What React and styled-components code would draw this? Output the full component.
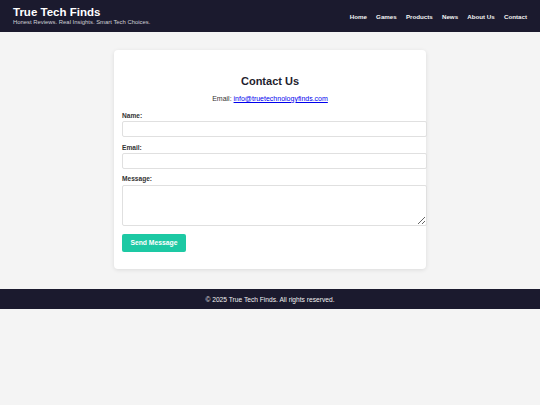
import React from "react";
import styled, { createGlobalStyle } from "styled-components";

const Global = createGlobalStyle`
  html, body { margin: 0; padding: 0; background: #f4f4f4; }
  body { font-family: "Liberation Sans", Arial, sans-serif; color: #333; }
  * { font-family: "Liberation Sans", Arial, sans-serif; }
`;

const Header = styled.header`
  background: #1b1a2e;
  color: #fff;
  height: 32px;
  box-sizing: border-box;
  padding: 0 13px;
  display: flex;
  align-items: center;
  justify-content: space-between;
`;

const Brand = styled.div`
  display: flex;
  flex-direction: column;
`;

const Title = styled.h1`
  margin: 0;
  font-size: 11.5px;
  line-height: 1.15;
  font-weight: 700;
  color: #fff;
`;

const Tagline = styled.p`
  margin: 0;
  font-size: 5.9px;
  line-height: 1.15;
  color: #cfcfd6;
`;

const Nav = styled.nav`
  display: flex;
  gap: 9.2px;
  padding-top: 1px;
`;

const NavLink = styled.a`
  color: #f4f4f4;
  text-decoration: none;
  font-weight: 700;
  font-size: 6.2px;
`;

const Main = styled.main`
  padding: 18px 0 20.7px;
`;

const Card = styled.section`
  width: 296px;
  margin: 0 auto;
  padding: 8px 8px 8.5px;
  background: #fff;
  border-radius: 4px;
  box-shadow: 0 1px 4px rgba(0, 0, 0, 0.1);
`;

const Heading = styled.h2`
  margin: 17.4px 0 0;
  text-align: center;
  font-size: 11px;
  line-height: 1.15;
  font-weight: 700;
  color: #1f1e2e;
`;

const Intro = styled.p`
  margin: 6.9px 0 0;
  text-align: center;
  font-size: 7px;
  line-height: 1.15;
  color: #333;

  a { color: #0000ee; }
`;

const Form = styled.form`
  margin-top: 9.1px;
`;

const Label = styled.label`
  display: block;
  font-size: 6.6px;
  line-height: 1.15;
  font-weight: 700;
  color: #333;
  margin-bottom: 1.6px;
`;

const Field = styled.input`
  display: block;
  box-sizing: content-box;
  width: 100%;
  height: ${(p) => p.$h || 8}px;
  padding: 3px 3.3px;
  margin: 0 0 6.5px;
  border: 1px solid #e0e0e0;
  border-radius: 2px;
  font-size: 6.7px;
  background: #fff;
  outline: none;
`;

const Area = styled(Field).attrs({ as: "textarea" })`
  resize: vertical;
  margin-bottom: 8px;
`;

const Button = styled.button`
  display: block;
  height: 18px;
  padding: 0 8.4px;
  margin-bottom: 8.5px;
  border: none;
  border-radius: 2px;
  background: #1dc9a4;
  color: #fff;
  font-size: 6.77px;
  font-weight: 700;
  cursor: pointer;
`;

const Footer = styled.footer`
  background: #1b1a2e;
  color: #f0f0f0;
  height: 20px;
  display: flex;
  align-items: center;
  justify-content: center;
  font-size: 6.66px;
`;

export default function App() {
  return (
    <>
      <Global />
      <Header>
        <Brand>
          <Title>True Tech Finds</Title>
          <Tagline>Honest Reviews. Real Insights. Smart Tech Choices.</Tagline>
        </Brand>
        <Nav>
          <NavLink href="#">Home</NavLink>
          <NavLink href="#">Games</NavLink>
          <NavLink href="#">Products</NavLink>
          <NavLink href="#">News</NavLink>
          <NavLink href="#">About Us</NavLink>
          <NavLink href="#">Contact</NavLink>
        </Nav>
      </Header>
      <Main>
        <Card>
          <Heading>Contact Us</Heading>
          <Intro>
            Email: <a href="#">info@truetechnologyfinds.com</a>
          </Intro>
          <Form onSubmit={(e) => e.preventDefault()}>
            <Label htmlFor="name">Name:</Label>
            <Field id="name" type="text" />
            <Label htmlFor="email">Email:</Label>
            <Field id="email" type="email" />
            <Label htmlFor="message">Message:</Label>
            <Area id="message" $h={33} />
            <Button type="submit">Send Message</Button>
          </Form>
        </Card>
      </Main>
      <Footer>© 2025 True Tech Finds. All rights reserved.</Footer>
    </>
  );
}
